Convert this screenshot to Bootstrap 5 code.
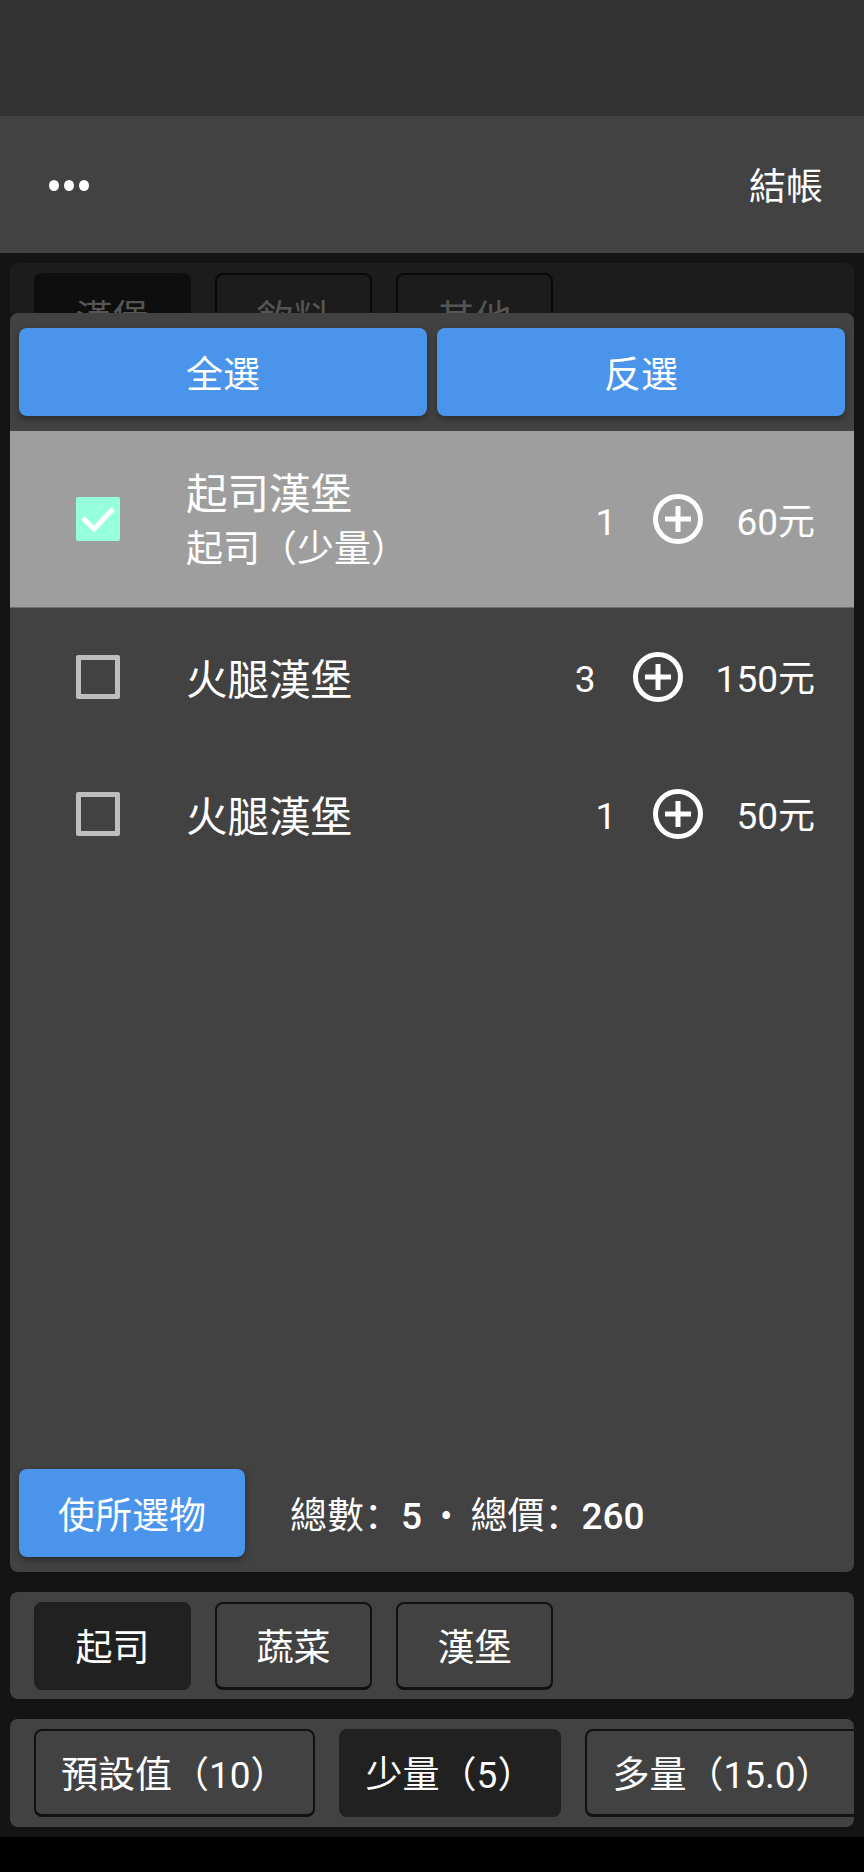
<!DOCTYPE html>
<html lang="zh-CN">
<head>
    <meta charset="UTF-8">
    <meta name="viewport" content="width=device-width, initial-scale=1.0">
    <title>結帳</title>
    <link href="https://cdn.jsdelivr.net/npm/bootstrap@5.3.0/dist/css/bootstrap.min.css" rel="stylesheet">
    <style>
        html, body {
            height: 1872px;
            overflow: hidden;
        }
        body {
            background: #000;
            color: #fff;
            font-family: Roboto, "Noto Sans CJK SC", sans-serif;
            font-size: 37px;
            line-height: 1.2;
        }
        .status-strip {
            height: 116px;
            background: #333;
        }
        .top-bar {
            height: 137px;
            background: #424242;
            padding: 0 41px 0 49px;
        }
        .more-dots {
            gap: 5px;
            padding-top: 1px;
        }
        .more-dots span {
            display: block;
            width: 10px;
            height: 11px;
            border-radius: 50%;
            background: #fff;
        }
        .text-low {
            padding-top: 8px;
        }
        .screen-body {
            height: 1584px;
            background: #141414;
            padding: 10px 10px 0;
        }
        .dim-tabs {
            height: 50px;
            overflow: hidden;
            background: #1c1c1c;
            border-radius: 8px 8px 0 0;
            padding: 10px 24px 0;
        }
        .dim-tabs .tab-btn {
            background: #1c1c1c;
            color: #555;
            border-color: #0a0a0a;
        }
        .dim-tabs .tab-btn.is-on {
            background: #0e0e0e;
            border-color: #0e0e0e;
            color: #555;
        }
        .tab-btn {
            flex: none;
            height: 88px;
            padding: 8px 25px 0;
            font-size: 37px;
            line-height: 1.2;
            color: #fff;
            background: #424242;
            border: 2px solid #111;
            border-bottom-width: 3px;
            border-radius: 8px;
        }
        .tab-btn.is-on {
            background: #212121;
            border-color: #212121;
            color: #fff;
        }
        .tab-btn.w-fixed {
            width: 157px;
            padding: 8px 0 0;
        }
        .pick-panel {
            height: 1259px;
            background: #424242;
            border-radius: 8px;
            padding-top: 15px;
            overflow: hidden;
        }
        .select-row {
            padding: 0 9px;
            gap: 10px;
        }
        .select-row .blue-btn {
            flex: 1 1 0;
        }
        .blue-btn {
            height: 88px;
            padding: 8px 0 0;
            background: #4a94ec;
            border: 0;
            border-radius: 8px;
            color: #fff;
            font-size: 37px;
            line-height: 1.2;
            box-shadow: 0 3px 6px rgba(0, 0, 0, .35);
        }
        .blue-btn:hover {
            background: #4a94ec;
            color: #fff;
        }
        .food-list {
            margin-top: 15px;
        }
        .food-list .food-item {
            background: transparent;
            color: #fff;
            border: 0;
            border-radius: 0;
            padding: 0 39px 0 66px;
            height: 137px;
        }
        .food-list .food-item.is-picked {
            background: #9e9e9e;
            height: 177px;
            border-bottom: 1px solid #6e6e6e;
        }
        .tick-box {
            flex: none;
            width: 44px;
            height: 44px;
            border: 5px solid #bdbdbd;
            border-radius: 2px;
            margin-right: 66px;
        }
        .tick-box.is-on {
            background: #96ffdc;
            border: 0;
        }
        .tick-box svg {
            display: block;
        }
        .food-text {
            padding-top: 4px;
        }
        .food-name {
            font-size: 41.5px;
            line-height: 1.2;
        }
        .food-sub {
            font-size: 37px;
            line-height: 1.2;
            margin-top: 8px;
        }
        .plus-icon {
            flex: none;
            margin: 0 33px 0 37px;
        }
        .sum-row {
            padding: 0 9px;
            margin-bottom: 15px;
        }
        .sum-btn {
            width: 226px;
        }
        .sum-text {
            margin-left: 45px;
        }
        .sum-text b {
            font-weight: 500;
        }
        .sum-dot {
            margin: 0 18px;
        }
        .option-bar {
            height: 107px;
            background: #424242;
            border-radius: 8px;
            margin-top: 20px;
            padding: 10px 24px;
        }
        .option-bar.scroll-row {
            height: 108px;
            overflow: hidden;
        }
    </style>
</head>
<body>
    <div class="status-strip"></div>

    <div class="top-bar d-flex align-items-center justify-content-between">
        <div class="more-dots d-flex"><span></span><span></span><span></span></div>
        <div class="text-low">結帳</div>
    </div>

    <div class="screen-body">
        <div class="dim-tabs d-flex gap-4">
            <button class="btn tab-btn w-fixed is-on" type="button">漢堡</button>
            <button class="btn tab-btn w-fixed" type="button">飲料</button>
            <button class="btn tab-btn w-fixed" type="button">其他</button>
        </div>

        <div class="pick-panel d-flex flex-column">
            <div class="select-row d-flex">
                <button class="btn blue-btn" type="button">全選</button>
                <button class="btn blue-btn" type="button">反選</button>
            </div>

            <div class="list-group food-list flex-grow-1">
                <div class="list-group-item food-item is-picked d-flex align-items-center">
                    <div class="tick-box is-on">
                        <svg width="44" height="44" viewBox="0 0 44 44"><path d="M7 21 L18 32 L37 12" fill="none" stroke="#fff" stroke-width="5"/></svg>
                    </div>
                    <div class="flex-grow-1 food-text">
                        <div class="food-name">起司漢堡</div>
                        <div class="food-sub">起司（少量）</div>
                    </div>
                    <span class="text-low">1</span>
                    <svg class="plus-icon" width="50" height="50" viewBox="0 0 50 50"><circle cx="25" cy="25" r="22.5" fill="none" stroke="#fff" stroke-width="5"/><path d="M12 25 H38 M25 12 V38" stroke="#fff" stroke-width="5"/></svg>
                    <span class="text-low">60元</span>
                </div>
                <div class="list-group-item food-item d-flex align-items-center">
                    <div class="tick-box"></div>
                    <div class="food-name flex-grow-1 text-low">火腿漢堡</div>
                    <span class="text-low">3</span>
                    <svg class="plus-icon" width="50" height="50" viewBox="0 0 50 50"><circle cx="25" cy="25" r="22.5" fill="none" stroke="#fff" stroke-width="5"/><path d="M12 25 H38 M25 12 V38" stroke="#fff" stroke-width="5"/></svg>
                    <span class="text-low">150元</span>
                </div>
                <div class="list-group-item food-item d-flex align-items-center">
                    <div class="tick-box"></div>
                    <div class="food-name flex-grow-1 text-low">火腿漢堡</div>
                    <span class="text-low">1</span>
                    <svg class="plus-icon" width="50" height="50" viewBox="0 0 50 50"><circle cx="25" cy="25" r="22.5" fill="none" stroke="#fff" stroke-width="5"/><path d="M12 25 H38 M25 12 V38" stroke="#fff" stroke-width="5"/></svg>
                    <span class="text-low">50元</span>
                </div>
            </div>

            <div class="sum-row d-flex align-items-center">
                <button class="btn blue-btn sum-btn" type="button">使所選物</button>
                <div class="sum-text text-low">總數：<b>5</b><span class="sum-dot">•</span>總價：<b>260</b></div>
            </div>
        </div>

        <div class="option-bar d-flex gap-4">
            <button class="btn tab-btn w-fixed is-on" type="button">起司</button>
            <button class="btn tab-btn w-fixed" type="button">蔬菜</button>
            <button class="btn tab-btn w-fixed" type="button">漢堡</button>
        </div>

        <div class="option-bar scroll-row d-flex gap-4">
            <button class="btn tab-btn" type="button">預設值（10）</button>
            <button class="btn tab-btn is-on" type="button">少量（5）</button>
            <button class="btn tab-btn" type="button">多量（15.0）</button>
        </div>
    </div>

    <script src="https://cdn.jsdelivr.net/npm/bootstrap@5.3.0/dist/js/bootstrap.bundle.min.js"></script>
</body>
</html>
